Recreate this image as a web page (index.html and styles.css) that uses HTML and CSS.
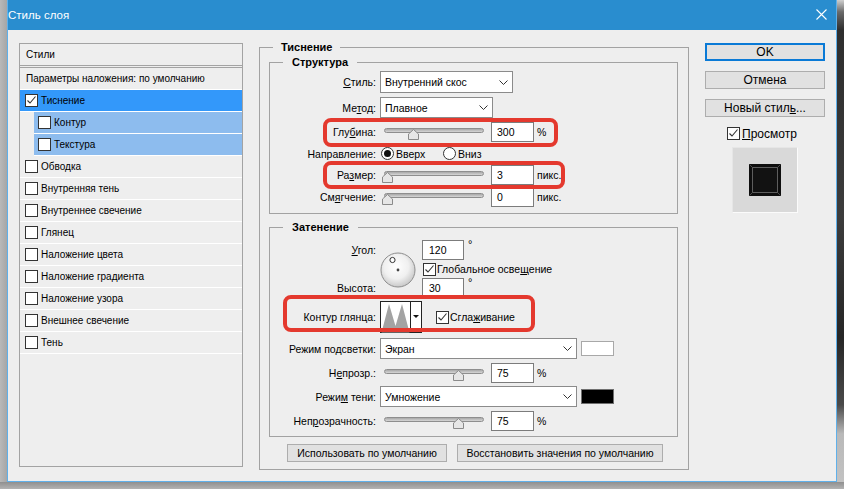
FILE: index.html
```html
<!DOCTYPE html>
<html lang="ru">
<head>
<meta charset="utf-8">
<title>Стиль слоя</title>
<link rel="stylesheet" href="styles.css">
</head>
<body>
<div class="screen">
  <div class="edge-left"></div>
  <div class="dialog">
    <div class="titlebar">
      <span class="title">Стиль слоя</span>
      <svg class="close" width="11" height="11" viewBox="0 0 11 11"><path d="M0.5 0.5L10.5 10.5M10.5 0.5L0.5 10.5" stroke="#fff" stroke-width="1.1" fill="none"/></svg>
    </div>
    <div class="content">
      <div class="styles-panel">
        <div class="sp-header">Стили</div>
        <div class="sp-list">
          <div class="sp-row plain">Параметры наложения: по умолчанию</div>
          <div class="sp-row sel"><span class="cb"><svg width="11" height="11" viewBox="0 0 11 11"><path d="M1.5 5.5L4 8L9.5 1.5" fill="none" stroke="#333" stroke-width="1.1"/></svg></span>Тиснение</div>
          <div class="sp-row sub"><span class="cb"></span>Контур</div>
          <div class="sp-row sub"><span class="cb"></span>Текстура</div>
          <div class="sp-row"><span class="cb"></span>Обводка</div>
          <div class="sp-row"><span class="cb"></span>Внутренняя тень</div>
          <div class="sp-row"><span class="cb"></span>Внутреннее свечение</div>
          <div class="sp-row"><span class="cb"></span>Глянец</div>
          <div class="sp-row"><span class="cb"></span>Наложение цвета</div>
          <div class="sp-row"><span class="cb"></span>Наложение градиента</div>
          <div class="sp-row"><span class="cb"></span>Наложение узора</div>
          <div class="sp-row"><span class="cb"></span>Внешнее свечение</div>
          <div class="sp-row"><span class="cb"></span>Тень</div>
        </div>
      </div>

      <div class="main">
        <fieldset class="group outer">
          <legend>Тиснение</legend>

          <fieldset class="group inner structure">
            <legend>Структура</legend>
            <div class="frow r-style">
              <span class="lbl"><u>С</u>тиль:</span>
              <div class="select w-style"><span>Внутренний скос</span><svg class="chev" width="9" height="5" viewBox="0 0 9 5"><path d="M0.5 0.5L4.5 4.5L8.5 0.5" fill="none" stroke="#333"/></svg></div>
            </div>
            <div class="frow r-method">
              <span class="lbl">Ме<u>т</u>од:</span>
              <div class="select w-method"><span>Плавное</span><svg class="chev" width="9" height="5" viewBox="0 0 9 5"><path d="M0.5 0.5L4.5 4.5L8.5 0.5" fill="none" stroke="#333"/></svg></div>
            </div>
            <div class="frow r-depth">
              <span class="lbl">Глу<u>б</u>ина:</span>
              <div class="slider"><span class="track"></span><svg class="thumb" style="left:28px" width="11" height="11" viewBox="0 0 11 11"><path d="M5.5 0.5L10.5 5V10.5H0.5V5Z" fill="#e6e6e6" stroke="#8a8a8a"/></svg></div>
              <span class="field">300</span>
              <span class="unit">%</span>
            </div>
            <div class="frow r-dir">
              <span class="lbl">Направление:</span>
              <span class="ropt"><span class="radio on"></span><span class="rtext">Вверх</span></span>
              <span class="ropt"><span class="radio"></span><span class="rtext">Вниз</span></span>
            </div>
            <div class="frow r-size">
              <span class="lbl">Ра<u>з</u>мер:</span>
              <div class="slider"><span class="track"></span><svg class="thumb" style="left:2px" width="11" height="11" viewBox="0 0 11 11"><path d="M5.5 0.5L10.5 5V10.5H0.5V5Z" fill="#e6e6e6" stroke="#8a8a8a"/></svg></div>
              <span class="field">3</span>
              <span class="unit">пикс.</span>
            </div>
            <div class="frow r-soft">
              <span class="lbl">См<u>я</u>гчение:</span>
              <div class="slider"><span class="track"></span><svg class="thumb" style="left:2px" width="11" height="11" viewBox="0 0 11 11"><path d="M5.5 0.5L10.5 5V10.5H0.5V5Z" fill="#e6e6e6" stroke="#8a8a8a"/></svg></div>
              <span class="field">0</span>
              <span class="unit">пикс.</span>
            </div>
          </fieldset>

          <fieldset class="group inner shading">
            <legend>Затенение</legend>
            <div class="angle">
              <span class="lbl a-row1"><u>У</u>гол:</span>
              <span class="dial">
                <svg width="36" height="36" viewBox="0 0 36 36">
                  <defs>
                    <radialGradient id="dg" cx="45%" cy="40%" r="60%">
                      <stop offset="0" stop-color="#ffffff"/>
                      <stop offset="0.6" stop-color="#f0f0f0"/>
                      <stop offset="1" stop-color="#c9c9c9"/>
                    </radialGradient>
                  </defs>
                  <circle cx="18" cy="18" r="17" fill="url(#dg)" stroke="#8e8e8e"/>
                  <circle cx="12.5" cy="8" r="2.6" fill="#fff" stroke="#333" stroke-width="1"/>
                  <circle cx="18" cy="18" r="1.4" fill="#444"/>
                </svg>
              </span>
              <span class="ctl a-row1"><span class="field">120</span><span class="deg">°</span></span>
              <span class="ctl a-row2"><span class="cb"><svg width="11" height="11" viewBox="0 0 11 11"><path d="M1.5 5.5L4 8L9.5 1.5" fill="none" stroke="#333" stroke-width="1.1"/></svg></span>Глобальное осве<u>щ</u>ение</span>
              <span class="lbl a-row3">Высота:</span>
              <span class="ctl a-row3"><span class="field">30</span><span class="deg">°</span></span>
            </div>
            <div class="frow r-contour">
              <span class="lbl">Контур глянца:</span>
              <svg class="contour" width="42" height="32" viewBox="0 0 42 32">
                <rect x="0.5" y="0.5" width="41" height="31" fill="#fff" stroke="#222"/>
                <polygon points="1.5,31.5 9,3 15.5,25 22,3 29.5,31.5" fill="#a3a3a3"/>
                <line x1="30.5" y1="0.5" x2="30.5" y2="31.5" stroke="#222"/>
                <polygon points="33,14 39,14 36,17" fill="#111"/>
              </svg>
              <span class="cb aa"><svg width="11" height="11" viewBox="0 0 11 11"><path d="M1.5 5.5L4 8L9.5 1.5" fill="none" stroke="#333" stroke-width="1.1"/></svg></span><span>Сгла<u>ж</u>ивание</span>
            </div>
            <div class="frow r-hl">
              <span class="lbl">Режим по<u>д</u>светки:</span>
              <div class="select w-mode"><span>Экран</span><svg class="chev" width="9" height="5" viewBox="0 0 9 5"><path d="M0.5 0.5L4.5 4.5L8.5 0.5" fill="none" stroke="#333"/></svg></div>
              <span class="swatch white"></span>
            </div>
            <div class="frow r-op1">
              <span class="lbl">Н<u>е</u>прозр.:</span>
              <div class="slider"><span class="track"></span><svg class="thumb" style="left:73px" width="11" height="11" viewBox="0 0 11 11"><path d="M5.5 0.5L10.5 5V10.5H0.5V5Z" fill="#e6e6e6" stroke="#8a8a8a"/></svg></div>
              <span class="field">75</span>
              <span class="unit">%</span>
            </div>
            <div class="frow r-sh">
              <span class="lbl">Режи<u>м</u> тени:</span>
              <div class="select w-mode"><span>Умножение</span><svg class="chev" width="9" height="5" viewBox="0 0 9 5"><path d="M0.5 0.5L4.5 4.5L8.5 0.5" fill="none" stroke="#333"/></svg></div>
              <span class="swatch black"></span>
            </div>
            <div class="frow r-op2">
              <span class="lbl">Неп<u>р</u>озрачность:</span>
              <div class="slider"><span class="track"></span><svg class="thumb" style="left:73px" width="11" height="11" viewBox="0 0 11 11"><path d="M5.5 0.5L10.5 5V10.5H0.5V5Z" fill="#e6e6e6" stroke="#8a8a8a"/></svg></div>
              <span class="field">75</span>
              <span class="unit">%</span>
            </div>
          </fieldset>

          <div class="defaults">
            <span class="btn b-use">Использовать по умолчанию</span>
            <span class="btn b-reset">Восстановить значения по умолчанию</span>
          </div>
        </fieldset>

        <div class="mark mark-depth"></div>
        <div class="mark mark-size"></div>
        <div class="mark mark-contour"></div>
      </div>

      <div class="side">
        <span class="btn big default">OK</span>
        <span class="btn big">Отмена</span>
        <span class="btn big">Новый стил<u>ь</u>...</span>
        <div class="preview-check"><span class="cb"><svg width="11" height="11" viewBox="0 0 11 11"><path d="M1.5 5.5L4 8L9.5 1.5" fill="none" stroke="#333" stroke-width="1.1"/></svg></span><span><u>П</u>росмотр</span></div>
        <div class="preview">
          <svg width="32" height="32" viewBox="0 0 32 32">
            <rect x="0" y="0" width="32" height="32" fill="#0e0e0e"/>
            <rect x="3.5" y="3.5" width="25" height="25" fill="#121212" stroke="#5e5e5e"/>
            <path d="M0.5 0.5L3.5 3.5M31.5 0.5L28.5 3.5M0.5 31.5L3.5 28.5M31.5 31.5L28.5 28.5" stroke="#4a4a4a"/>
          </svg>
        </div>
      </div>
    </div>
  </div>
  <div class="edge-right"></div>
</div>
<div class="bottom-edge"></div>
</body>
</html>
```
FILE: styles.css
```css
* { box-sizing: border-box; }
html, body { margin: 0; padding: 0; }
body {
  width: 844px;
  height: 489px;
  overflow: hidden;
  background: #a9a9a9;
  font-family: "Liberation Sans", Arial, sans-serif;
  font-size: 11px;
  color: #000;
}
u { text-decoration: underline; text-underline-offset: 1px; }

.screen { display: flex; height: 482px; }
.edge-left { width: 7px; flex: none; background: linear-gradient(to right, #b9b9b9, #a6a6a6); }
.edge-right {
  width: 8px; flex: none;
  background: linear-gradient(to bottom, #cfcfcf 0, #6a6a6a 12px, #2e2e2e 30px, #3c3c3c 45%, #262626 70%, #4a4a4a 84%, #b9b9b9 90%, #c2c2c2 100%);
}
.bottom-edge { height: 7px; background: linear-gradient(#8f8f8f, #b3b3b3); }

.dialog {
  width: 830px; height: 482px; flex: none;
  border: 1px solid #5fb0ea;
  border-top: 0;
  background: #eeeeee;
  display: flex; flex-direction: column;
}
.titlebar {
  height: 30px; flex: none;
  background: #298dcf;
  display: flex; align-items: center; justify-content: space-between;
  padding: 0 9px 1px 0;
  color: #fff;
  font-size: 11.5px;
}
.close { display: block; }

.content {
  display: grid;
  grid-template-columns: 224px 430px 120px;
  column-gap: 16px;
  padding: 13px 0 0 11px;
  align-items: start;
}

/* Styles list */
.styles-panel { height: 424px; border: 1px solid #a3a3a3; background: #eeeeee; font-size: 10px; }
.sp-header { height: 22px; line-height: 21px; padding-left: 6px; border-bottom: 1px solid #a3a3a3; }
.sp-list { margin-top: 1px; border-top: 1px solid #a3a3a3; }
.sp-row {
  height: 22px;
  border-bottom: 1px solid #ffffff;
  display: flex; align-items: center;
  padding-left: 5px;
  white-space: nowrap;
}
.sp-row.plain { padding-left: 6px; }
.sp-row.sel { background: #3398fa; }
.sp-row.sub { background: #8dbcee; margin-left: 14px; padding-left: 4px; }
.sp-row .cb { margin-right: 3px; }

.cb {
  width: 13px; height: 13px; flex: none;
  border: 1px solid #333;
  background: #fff;
  display: inline-flex; align-items: center; justify-content: center;
}
.cb svg { display: block; }

/* Main group */
.main { position: relative; margin-top: -2px; font-size: 10.5px; }
fieldset.group { margin: 0; min-width: 0; border: 1px solid #a2a2a2; }
fieldset.group legend { font-weight: bold; line-height: 13px; font-size: 11px; }
fieldset.outer { padding: 2px 10px 7px 9px; }
fieldset.outer > legend { margin-left: 4px; padding: 0 8px; }
fieldset.inner { padding: 2px 0 6px 0; }
fieldset.inner > legend { margin-left: 13px; padding: 0 9px; }
fieldset.shading { margin-top: 7px; padding-bottom: 5px; padding-top: 3px; }

.frow { display: flex; align-items: center; white-space: nowrap; }
.lbl { width: 106px; margin-right: 4px; text-align: right; flex: none; white-space: nowrap; }

.r-style { height: 22px; }
.r-method { height: 21px; margin-top: 4px; }
.r-depth { height: 21px; margin-top: 3px; }
.r-dir { height: 23px; }
.r-size { height: 20px; }
.r-soft { height: 20px; margin-top: 2px; }

.select {
  height: 100%;
  border: 1px solid #8b8b8b;
  background: #fff;
  display: flex; align-items: center; justify-content: space-between;
  padding: 0 4px 0 4px;
}
.w-style { width: 133px; }
.w-method { width: 113px; }
.w-mode { width: 197px; height: 21px; }
.chev { display: block; flex: none; }

.slider { position: relative; width: 107px; height: 20px; flex: none; }
.track {
  display: block;
  margin: 6px 0 0 4px;
  width: 100px; height: 5px;
  border-radius: 3px;
  border: 1px solid #8e8e8e;
  background: linear-gradient(#a8a8a8, #d6d6d6);
}
.thumb { position: absolute; top: 7px; display: block; }

.field {
  width: 43px; height: 20px; flex: none;
  margin-left: 4px;
  border: 1px solid #7c7c7c;
  background: #fff;
  display: flex; align-items: center;
  padding-left: 5px;
}
.unit { margin-left: 3px; }

.ropt { display: flex; align-items: center; width: 62px; margin-left: 1px; }
.ropt + .ropt { margin-left: 0; }
.radio {
  width: 13px; height: 13px; flex: none;
  border: 1px solid #333; border-radius: 50%;
  background: #fff;
  display: inline-flex; align-items: center; justify-content: center;
}
.radio.on::after { content: ""; width: 7px; height: 7px; border-radius: 50%; background: #111; }
.rtext { margin-left: 2px; }

/* Angle block */
.angle {
  display: grid;
  grid-template-columns: 110px 42px auto;
  grid-template-rows: 20px 18px 20px;
  margin-top: 3px;
  align-items: center;
}
.angle .lbl { width: auto; margin-right: 0; padding-right: 4px; }
.a-row1 { grid-row: 1; }
.a-row2 { grid-row: 2; grid-column: 3; }
.a-row3 { grid-row: 3; }
.angle .lbl.a-row1, .angle .lbl.a-row3 { grid-column: 1; }
.angle .ctl.a-row1, .angle .ctl.a-row3 { grid-column: 3; }
.dial { grid-column: 2; grid-row: 1 / 4; align-self: center; margin-top: 1px; }
.dial svg { display: block; }
.ctl { display: flex; align-items: center; white-space: nowrap; height: 100%; }
.ctl .field { margin-left: 0; width: 42px; padding-left: 6px; }
.deg { align-self: flex-start; margin-left: 4px; line-height: 9px; font-size: 11px; }
.a-row2 .cb { margin-left: 1px; margin-right: 1px; }

.r-contour { height: 32px; margin-top: 3px; }
.contour { display: block; flex: none; }
.cb.aa { margin-left: 14px; margin-right: 1px; }

.r-hl { height: 21px; margin-top: 5px; }
.r-op1 { height: 21px; margin-top: 3px; }
.r-sh { height: 21px; margin-top: 3px; }
.r-op2 { height: 21px; margin-top: 3px; }
.swatch { width: 33px; height: 15px; margin-left: 4px; border: 1px solid #a8a8a8; }
.swatch.white { background: #fff; }
.swatch.black { background: #000; border-color: #6f6f6f; }

.defaults { display: flex; margin-top: 7px; padding-left: 18px; }
.btn {
  height: 18px;
  border: 1px solid #adadad;
  background: #e1e1e1;
  display: flex; align-items: center; justify-content: center;
  white-space: nowrap;
}
.b-use { width: 160px; }
.b-reset { width: 206px; margin-left: 10px; }

/* Annotation marks */
.mark { position: absolute; border: 4px solid #e4392e; border-radius: 8px; }
.mark-depth { left: 64px; top: 77px; width: 235px; height: 29px; }
.mark-size { left: 64px; top: 120px; width: 242px; height: 28px; }
.mark-contour { left: 24px; top: 254px; width: 252px; height: 37px; }

/* Side column */
.side { display: flex; flex-direction: column; font-size: 12px; }
.btn.big { font-size: 12px; }
.btn.big + .btn.big { margin-top: 10px; }
.btn.default { border: 2px solid #0a7ad6; }
.preview-check { display: flex; align-items: center; margin: 9px 0 0 22px; height: 15px; }
.preview-check .cb { margin-right: 2px; }
.preview {
  width: 66px; height: 66px;
  margin: 6px 0 0 27px;
  background: #d9d9d9;
  border: 1px solid #e6e6e6;
  border-right-color: #fbfbfb;
  border-bottom-color: #fbfbfb;
  display: flex; align-items: center; justify-content: center;
}
.preview svg { display: block; }
```
